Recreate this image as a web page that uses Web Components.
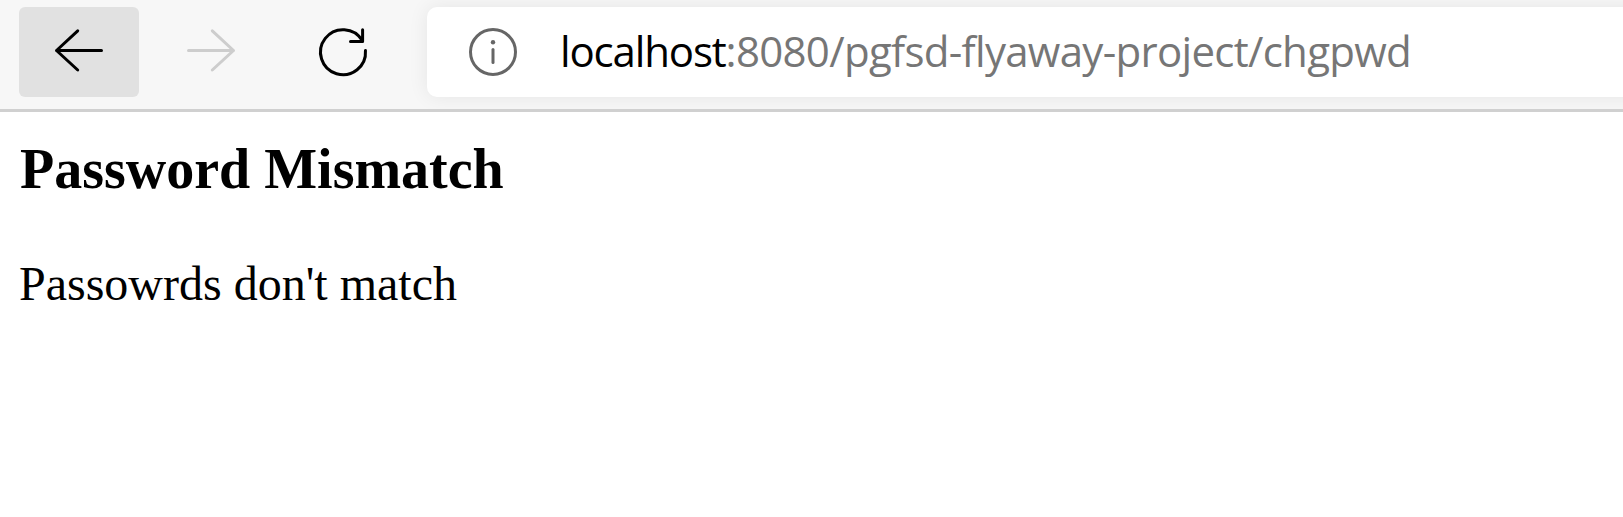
<!DOCTYPE html>
<html lang="en">
<head>
<meta charset="utf-8">
<title>Password Mismatch</title>
<style>
html, body { margin: 0; height: 100%; overflow: hidden; background: #fff; }
</style>
</head>
<body>
<browser-window>
  <browser-toolbar slot="toolbar">
    <nav-button active icon="back"></nav-button>
    <nav-button icon="forward"></nav-button>
    <nav-button icon="reload"></nav-button>
    <address-bar><span slot="host">localhost</span><span slot="path">:8080/pgfsd-flyaway-project/chgpwd</span></address-bar>
  </browser-toolbar>
  <page-message><span slot="title">Password Mismatch</span>Passowrds don't match</page-message>
</browser-window>
<script>
function define(name, html) {
  const template = document.createElement('template');
  template.innerHTML = html;
  customElements.define(name, class extends HTMLElement {
    constructor() {
      super();
      this.attachShadow({ mode: 'open' }).append(template.content.cloneNode(true));
    }
  });
}

define('browser-window', `
  <style>:host { display: flex; flex-direction: column; height: 100%; }</style>
  <slot name="toolbar"></slot><slot></slot>`);

define('browser-toolbar', `
  <style>
    :host { display: flex; box-sizing: border-box; height: 112px; flex: none; overflow: hidden;
      padding: 7px 0 12px 19px; background: #f7f7f7; border-bottom: 3px solid #d0d0d0; }
    ::slotted(nav-button) { margin-right: 12px; }
    ::slotted(address-bar) { margin-left: 12px; }
  </style>
  <slot></slot>`);

const icons = {
  back: '<path d="M101.500 50.500H56.500M77.700 30.800L56.500 50.500L77.700 70"/>',
  forward: '<path stroke="#cdcdcd" d="M56.500 50.500H101.500M80.300 30.800L101.500 50.500L80.300 70"/>',
  reload: '<path d="M101.450 50.500A22.500 22.500 0 1 1 98.300 40.600M98.600 29.800V41.500H86.500"/>'
};

customElements.define('nav-button', class extends HTMLElement {
  constructor() {
    super();
    this.attachShadow({ mode: 'open' });
  }
  connectedCallback() {
    this.shadowRoot.innerHTML = `
      <style>
        :host { display: block; width: 120px; height: 90px; border-radius: 6px; flex: none; }
        :host([active]) { background: #e1e1e1; }
        svg { display: block; }
      </style>
      <svg width="120" height="90" viewBox="19 7 120 90" fill="none" stroke="#000"
        stroke-width="3" stroke-linecap="round" stroke-linejoin="round">${icons[this.getAttribute('icon')]}</svg>`;
  }
});

define('address-bar', `
  <style>
    :host { display: flex; flex: 1; height: 90px; margin-right: -30px; padding-left: 42px;
      border-radius: 10px; background: #fff; box-shadow: 0 0 20px rgba(0,0,0,.075);
      font: 42px/88px "Open Sans", sans-serif; color: #767676; white-space: nowrap; box-sizing: border-box; }
    svg { flex: none; margin: 21px 43px 0 0; }
    .host { color: #000; letter-spacing: -1.150px; }
    .path { letter-spacing: -.7px; }
  </style>
  <svg width="48" height="48" viewBox="0 0 48 48" fill="none" stroke="#666" stroke-width="3" stroke-linecap="round">
    <circle cx="24" cy="24" r="22.500"/><path d="M24 21.500v13"/><circle cx="24" cy="14.200" r="2.200" fill="#666" stroke="none"/>
  </svg>
  <div class="host"><slot name="host"></slot></div><div class="path"><slot name="path"></slot></div>`);

define('page-message', `
  <style>
    :host { display: block; padding: 25px 19px; font: 48px/55px "Liberation Serif", serif; color: #000; }
    h3 { margin: 0 0 55px; padding-left: 1px; font-size: 56px; line-height: 64px; font-weight: bold; }
    p { margin: 0; }
  </style>
  <h3><slot name="title"></slot></h3><p><slot></slot></p>`);
</script>
</body>
</html>
